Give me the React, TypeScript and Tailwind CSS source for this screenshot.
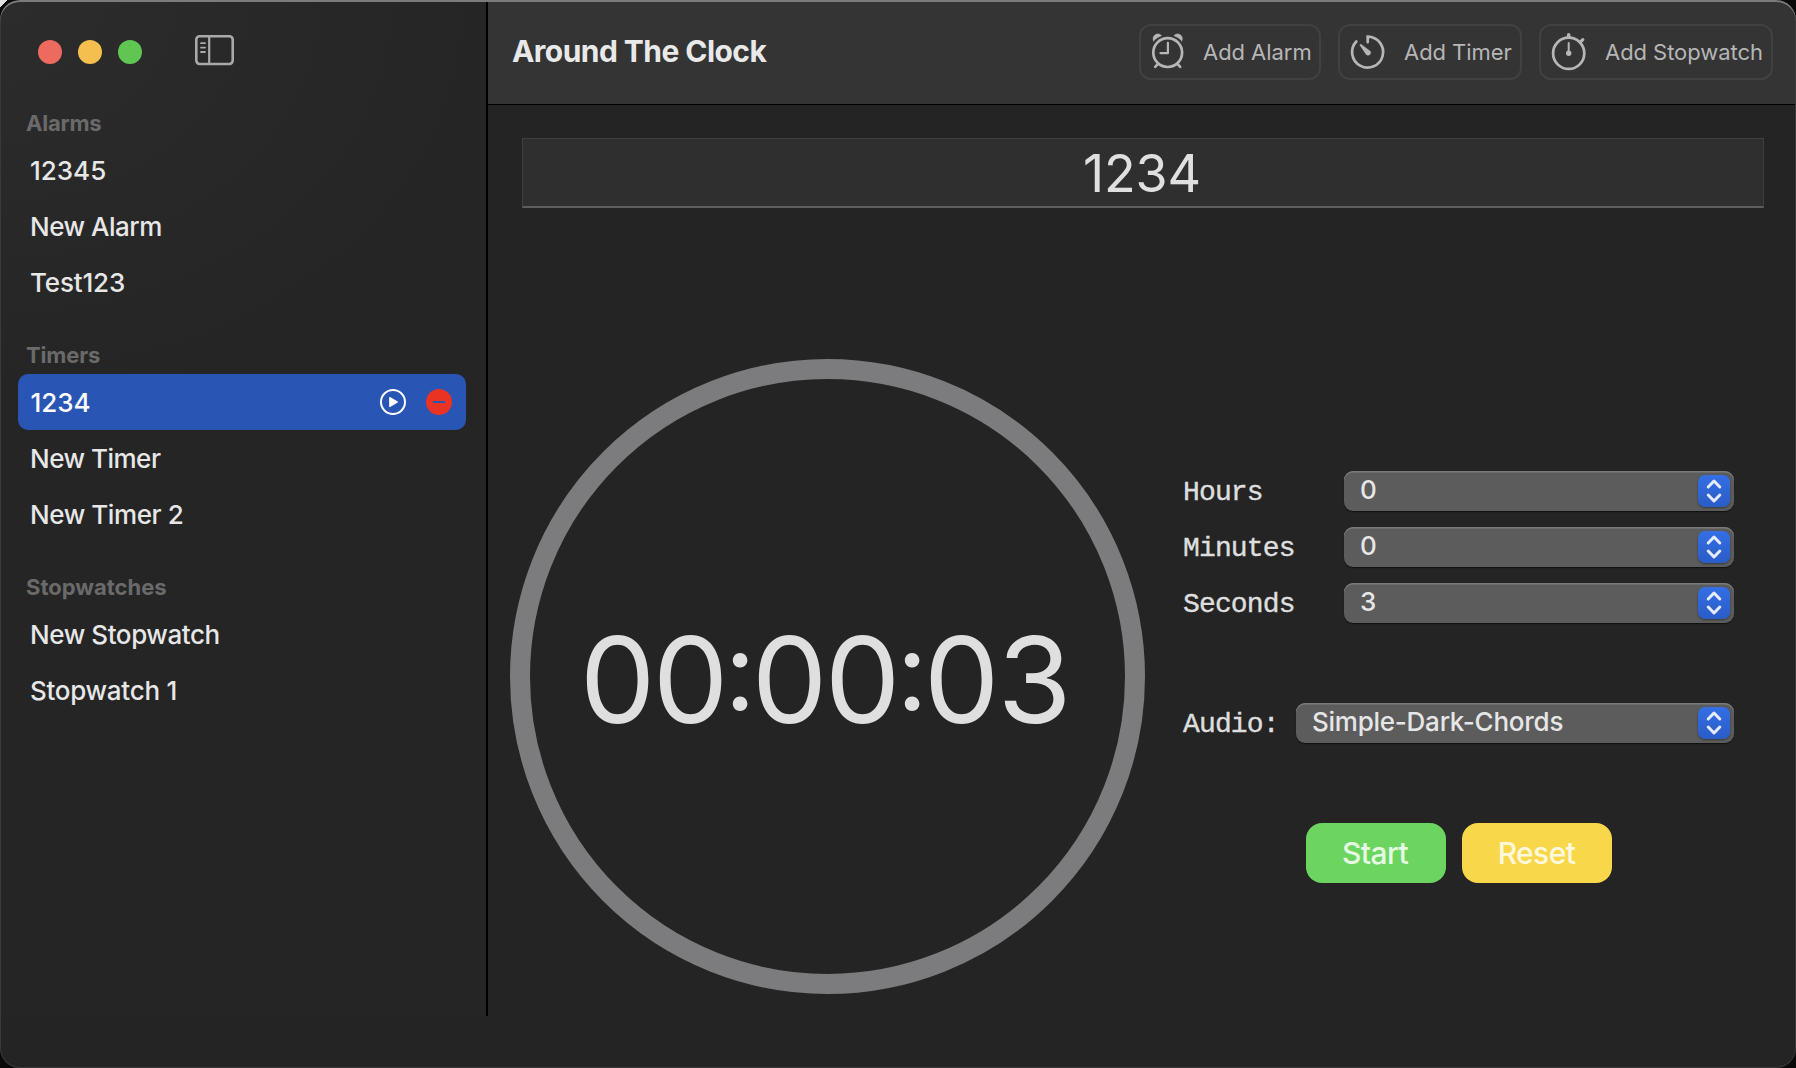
import type { ReactNode } from "react";

function SidebarToggleIcon() {
  return (
    <svg width="40" height="32" viewBox="0 0 40 32" fill="none" stroke="#a9a9a9">
      <rect x="1.3" y="2.2" width="36.4" height="27.8" rx="3.4" strokeWidth="2.6" />
      <path d="M14.2 2.5V30" strokeWidth="2.2" />
      <path d="M6 9.2h4M6 13.6h4M6 18h4" strokeWidth="1.8" strokeLinecap="round" />
    </svg>
  );
}

function AlarmIcon() {
  return (
    <svg width="40" height="40" viewBox="0 0 40 40" fill="none" stroke="#b6b6b6" strokeLinecap="round">
      <circle cx="19.7" cy="20.6" r="14.4" strokeWidth="2.7" />
      <path d="M19.9 10.8v10.4h-7.4" strokeWidth="2.2" strokeLinejoin="round" />
      <path d="M10 31.8 7.2 34.9M29.4 31.8l2.8 3.1" strokeWidth="2.6" />
      <path d="M5.6 8.9C4.2 6.1 5.6 2.9 9 2.1c2-.4 3.6.4 4.4 1.6C10.4 4.8 7.8 6.5 5.6 8.9ZM33.8 8.9c1.4-2.8 0-6-3.4-6.8-2-.4-3.6.4-4.4 1.6 3 1.1 5.6 2.8 7.8 5.200Z" fill="#b6b6b6" strokeWidth="0.6" strokeLinejoin="round" />
    </svg>
  );
}

function TimerIcon() {
  return (
    <svg width="40" height="40" viewBox="0 0 40 40" fill="none" stroke="#b6b6b6" strokeLinecap="round">
      <path d="M19.7 10.2V4.6A15.5 15.5 0 1 1 8.3 9.5" strokeWidth="2.7" />
      <path d="M12.2 12.6c.3-.3.7-.3 1.1-.1l8 5.9a2.6 2.6 0 1 1-3.5 3.5l-5.7-8.3c-.2-.3-.2-.7.1-1Z" fill="#b6b6b6" strokeWidth="0.4" />
    </svg>
  );
}

function StopwatchIcon() {
  return (
    <svg width="40" height="42" viewBox="0 0 40 42" fill="none" stroke="#b6b6b6" strokeLinecap="round">
      <circle cx="19.7" cy="22.3" r="15.6" strokeWidth="2.7" />
      <path d="M19.7 5.6V3.9" strokeWidth="3.6" />
      <path d="m31.8 10.6 2-1.900" strokeWidth="3.2" />
      <path d="M19.7 12v9" strokeWidth="2" />
      <circle cx="19.7" cy="22.3" r="2.7" fill="#b6b6b6" stroke="none" />
    </svg>
  );
}

function PlayIcon() {
  return (
    <svg width="26" height="26" viewBox="0 0 26 26" fill="none">
      <circle cx="13" cy="13" r="12" stroke="#fff" strokeWidth="2" />
      <path d="M9.8 8.6v8.8l7.600-4.400Z" fill="#fff" stroke="#fff" strokeWidth="1.2" strokeLinejoin="round" />
    </svg>
  );
}

function RemoveIcon() {
  return (
    <svg width="26" height="26" viewBox="0 0 26 26">
      <circle cx="13" cy="13" r="13" fill="#eb3323" />
      <rect x="6.8" y="12" width="12.4" height="2" rx="0.6" fill="#2955b4" />
    </svg>
  );
}

function SectionTitle({ children, className = "" }: { children: ReactNode; className?: string }) {
  return (
    <h2 className={`flex h-[38px] items-center pl-[26px] text-[22px] font-bold text-[#6a6a6a] ${className}`}>
      {children}
    </h2>
  );
}

function Row({ children, selected = false }: { children: ReactNode; selected?: boolean }) {
  return selected ? (
    <li className="mr-5 ml-[18px] flex h-14 items-center rounded-[10px] bg-[#2955b4] pr-3.5 pl-[12.5px] text-white">
      <span className="flex-1">{children}</span>
      <PlayIcon />
      <span className="w-5" />
      <RemoveIcon />
    </li>
  ) : (
    <li className="flex h-14 items-center pl-[30px]">{children}</li>
  );
}

function Sidebar() {
  return (
    <aside className="w-[488px] border-r-2 border-black bg-[radial-gradient(ellipse_500px_400px_at_0_0,#2c2c2c,#252525)]">
      <div className="flex h-[104px] items-center">
        <span className="ml-[38px] size-6 rounded-full bg-[#ed6a5e]" />
        <span className="ml-4 size-6 rounded-full bg-[#f5bf4f]" />
        <span className="ml-4 size-6 rounded-full bg-[#61c554]" />
        <span className="-mt-1 ml-[53px]">
          <SidebarToggleIcon />
        </span>
      </div>
      <nav className="text-[26px] font-medium tracking-[-0.5px] text-[#e7e7e7]">
        <SectionTitle className="tracking-[-0.2px]">Alarms</SectionTitle>
        <ul>
          <Row><span className="tracking-normal">12345</span></Row>
          <Row>New Alarm</Row>
          <Row><span className="tracking-[-0.15px]">Test123</span></Row>
        </ul>
        <SectionTitle className="mt-[26px] tracking-[-0.15px]">Timers</SectionTitle>
        <ul>
          <Row selected><span className="tracking-normal">1234</span></Row>
          <Row>New Timer</Row>
          <Row><span className="tracking-[-0.42px]">New Timer 2</span></Row>
        </ul>
        <SectionTitle className="mt-[26px] tracking-normal">Stopwatches</SectionTitle>
        <ul>
          <Row><span className="tracking-[-0.42px]">New Stopwatch</span></Row>
          <Row><span className="tracking-[-0.28px]">Stopwatch 1</span></Row>
        </ul>
      </nav>
    </aside>
  );
}

function ToolbarButton({ icon, label, className }: { icon: ReactNode; label: string; className: string }) {
  return (
    <button
      className={`flex h-14 items-center rounded-xl border-2 border-[#414141] text-[22px] tracking-[-0.05px] whitespace-nowrap text-[#b6b6b6] ${className}`}
    >
      {icon}
      {label}
    </button>
  );
}

function Toolbar() {
  return (
    <header className="flex h-[105px] items-center border-b border-black bg-[#343434] pr-[23px] pl-6">
      <h1 className="-mt-px flex-1 text-[30px] font-bold tracking-[-0.55px] text-[#e9e9e9]">Around The Clock</h1>
      <div className="flex gap-[17px]">
        <ToolbarButton className="w-[182px] gap-[15px] pl-[7px]" icon={<AlarmIcon />} label="Add Alarm" />
        <ToolbarButton className="w-[184px] gap-4 pl-2" icon={<TimerIcon />} label="Add Timer" />
        <ToolbarButton className="w-[234px] gap-4 pl-2" icon={<StopwatchIcon />} label="Add Stopwatch" />
      </div>
    </header>
  );
}

function Select({ value }: { value: string }) {
  return (
    <div className="flex h-10 flex-1 items-center rounded-[9px] bg-[#5c5c5c] pr-1 pl-4 text-[26px] font-[450] tracking-[-0.25px] text-[#e6e6e6] shadow-[inset_0_1.5px_0_#7a7a7a,0_1px_1px_#111]">
      <span className="-mt-[3px] flex-1">{value}</span>
      <span className="flex h-8 w-8 items-center justify-center rounded-[7px] bg-linear-to-b from-[#346fe4] to-[#2a5cc6] shadow-[0_1px_2px_#3a3a3a]">
        <svg width="18" height="26" viewBox="0 0 18 26" fill="none" stroke="#e4ebfa" strokeWidth="3" strokeLinecap="round" strokeLinejoin="round">
          <path d="m3.2 9 5.800-6L14.800 9M3.200 17l5.800 6 5.800-6" />
        </svg>
      </span>
    </div>
  );
}

function Field({ label, value, labelClass }: { label: string; value: string; labelClass: string }) {
  return (
    <div className="flex h-10 items-center">
      <span className={`pt-1 font-['Liberation_Mono',monospace] text-[28px] leading-[38px] tracking-[-0.85px] text-[#dedede] [-webkit-text-stroke:0.4px_#dedede] ${labelClass}`}>
        {label}
      </span>
      <Select value={value} />
    </div>
  );
}

function Countdown({ time }: { time: string }) {
  return (
    <div className="flex h-[635px] w-[635px] items-center justify-center rounded-full border-[20px] border-[#7c7c7e] pr-[3px] text-[120px] leading-none text-[#dfdfdf]">
      {time.split("").map((c, i) =>
        c === ":" ? (
          <span key={i} className="flex w-[26px] justify-center pt-2.5 text-[110px] [font-feature-settings:'case']">{c}</span>
        ) : (
          <span key={i} className="flex w-[73px] justify-center pt-1.5">{c}</span>
        ),
      )}
    </div>
  );
}

export default function App() {
  return (
    <div className="h-[1068px] w-[1796px] overflow-hidden bg-[linear-gradient(135deg,#e0e0e0_5px,#0a0a0a_5px)] font-['Inter',sans-serif]">
      <div className="relative flex h-full flex-col overflow-hidden rounded-[20px] bg-[#242424]">
        <div className="flex h-[1016px]">
          <Sidebar />
          <main className="flex-1">
            <Toolbar />
            <div className="mt-[33px] mr-8 ml-[34px] flex h-[70px] items-center justify-center border border-b-2 border-[#3f3f3f] border-b-[#5e5e5e] bg-[#2f2f2f] pt-0.5 pr-0.5 text-[52px] tracking-[-0.2px] text-[#e0e0e0]">
              1234
            </div>
            <div className="mt-[151px] flex pr-[62px] pl-[22px]">
              <Countdown time="00:00:03" />
              <div className="mt-28 ml-[38px] flex-1">
                <div className="flex flex-col gap-4">
                  <Field label="Hours" value="0" labelClass="w-[161px]" />
                  <Field label="Minutes" value="0" labelClass="w-[161px]" />
                  <Field label="Seconds" value="3" labelClass="w-[161px]" />
                </div>
                <div className="mt-20">
                  <Field label="Audio:" value="Simple-Dark-Chords" labelClass="w-[113px]" />
                </div>
                <div className="mt-20 ml-[123px] flex gap-4 text-[30px] font-medium tracking-[-0.6px]">
                  <button className="h-[60px] w-[140px] rounded-2xl bg-[#6bd55f] pr-0.5 text-[#e6f9e3]">Start</button>
                  <button className="h-[60px] w-[150px] rounded-2xl bg-[#f8d74a] pr-px text-[#fef8dd]">Reset</button>
                </div>
              </div>
            </div>
          </main>
        </div>
        <div className="pointer-events-none absolute inset-0 rounded-[20px] shadow-[inset_0_2px_0_#7b7b7b,inset_0_0_0_1px_#3a3a3a]" />
      </div>
    </div>
  );
}
